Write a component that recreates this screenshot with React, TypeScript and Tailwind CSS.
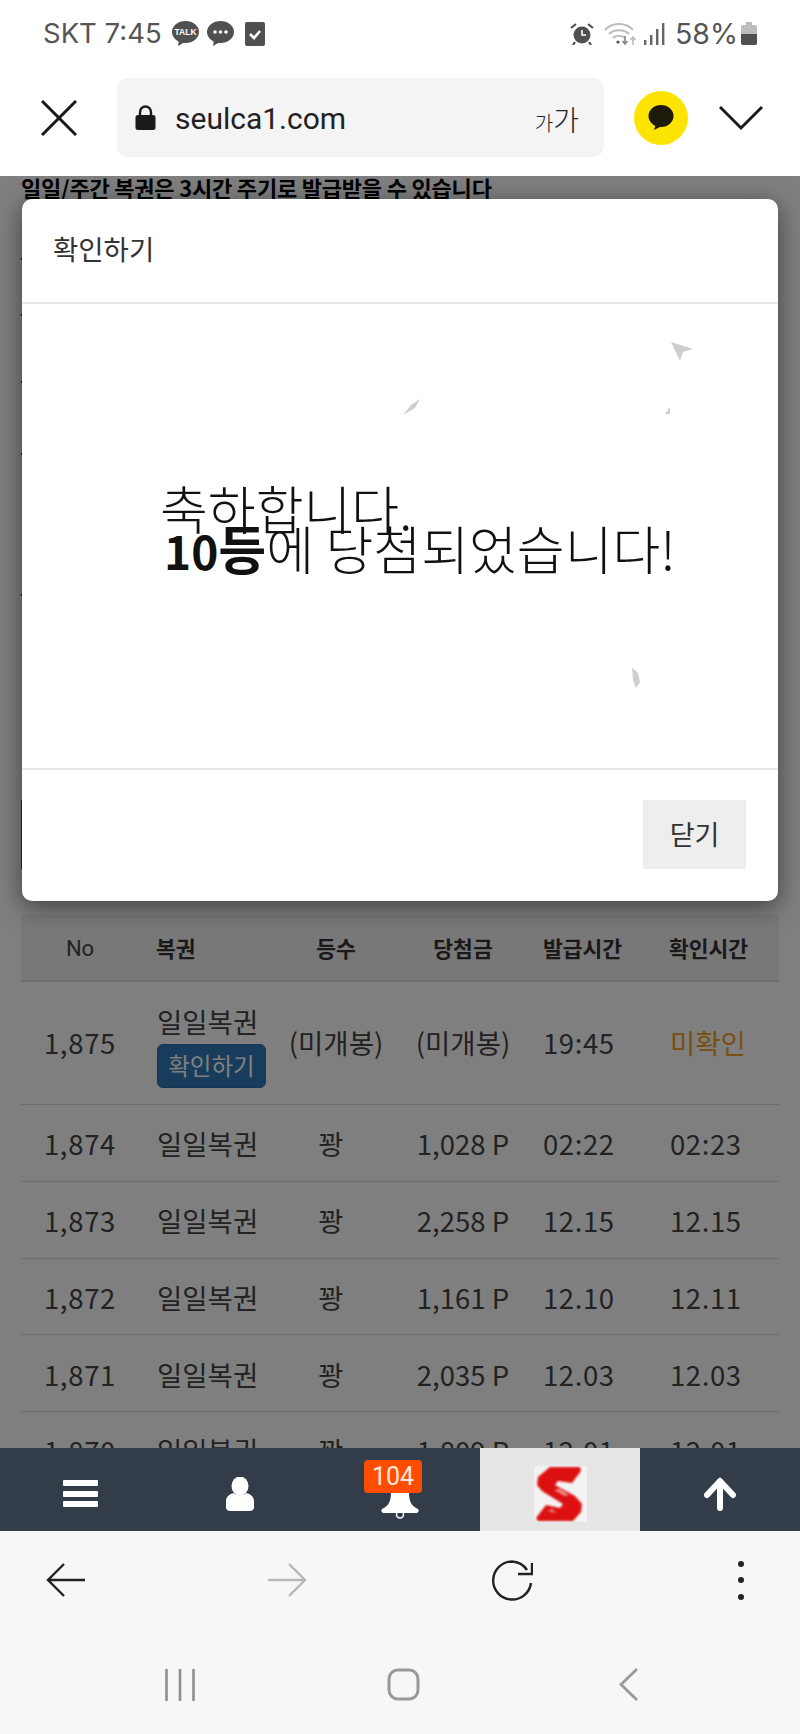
import React from "react";

const KR = { fontFamily: '"Noto Sans CJK KR", "Noto Sans", sans-serif' };
const UI = { fontFamily: 'Roboto, "Noto Sans CJK KR", sans-serif' };
const ST = { fontFamily: 'Inter, Roboto, sans-serif' };

function Talk({ dots }: { dots?: boolean }) {
  return (
    <svg width="27" height="25" viewBox="0 0 27 25">
      <ellipse cx="13.5" cy="11" rx="13.5" ry="11" fill="#505050" />
      <path d="M7 19l-1 6 7-4z" fill="#505050" />
      {dots ? (
        <g fill="#fff">
          <circle cx="8" cy="11" r="1.8" />
          <circle cx="13.5" cy="11" r="1.8" />
          <circle cx="19" cy="11" r="1.8" />
        </g>
      ) : (
        <text x="13.5" y="14" textAnchor="middle" fontSize="8.5" fontWeight="700" fill="#fff" fontFamily="Liberation Sans">TALK</text>
      )}
    </svg>
  );
}

const rows = [
  ["1,874", "1,028 P", "02:22", "02:23"],
  ["1,873", "2,258 P", "12.15", "12.15"],
  ["1,872", "1,161 P", "12.10", "12.11"],
  ["1,871", "2,035 P", "12.03", "12.03"],
  ["1,870", "1,809 P", "12.01", "12.01"],
];

const cols = "grid grid-cols-[118px_133px_128px_126px_126px_126px] items-center";

function Shard({ d }: { d: string }) {
  return <path d={d} fill="#cfcfcf" />;
}

export default function App() {
  return (
    <div className="w-[800px] h-[1734px] flex flex-col bg-white overflow-hidden text-[#222]" style={KR}>
      <div className="h-[176px] shrink-0 bg-white flex flex-col">
        <div className="h-[68px] flex items-start justify-between pt-[21px] pl-[43px] pr-[43px] text-[#555]" style={ST}>
          <div className="flex items-center h-[25px]">
            <span className="w-[129px] text-[27.500px] leading-[25px] whitespace-nowrap">SKT 7:45</span>
            <Talk />
            <span className="w-[8px]" />
            <Talk dots />
            <svg className="ml-[11px]" width="20" height="24" viewBox="0 0 20 24">
              <rect width="20" height="24" rx="2" fill="#505050" />
              <path d="M5 12l4 4 6-7" fill="none" stroke="#fff" strokeWidth="2.6" />
            </svg>
          </div>
          <div className="flex items-center h-[25px]">
            <svg width="24" height="22" viewBox="0 0 24 22">
              <circle cx="12" cy="12" r="8.5" fill="#505050" />
              <path d="M12 7v5h4" fill="none" stroke="#fff" strokeWidth="1.6" />
              <path d="M1 5l5-4M23 5l-5-4M5 19l-2 3M19 19l2 3" stroke="#505050" strokeWidth="2.2" />
            </svg>
            <svg className="ml-[10px]" width="34" height="24" viewBox="0 0 34 24">
              <g fill="none" stroke="#bdbdbd" strokeWidth="2.2">
                <path d="M1 8c7-8 21-8 28 0" />
                <path d="M5 12c5-5 15-5 20 0" />
                <path d="M9 16c3-3 9-3 12 0" />
              </g>
              <circle cx="14" cy="20" r="1.6" fill="#505050" />
              <path d="M21 14v7M18.500 19l2.500 3 2.500-3" fill="none" stroke="#888" strokeWidth="1.6" />
              <path d="M29 23v-7M26.500 18l2.500-3 2.500 3" fill="none" stroke="#bdbdbd" strokeWidth="1.6" />
            </svg>
            <svg className="ml-[6px]" width="22" height="22" viewBox="0 0 22 22">
              <g fill="#666">
                <rect x="0" y="17" width="2.400" height="5" />
                <rect x="6" y="12" width="2.400" height="10" />
                <rect x="12" y="6" width="2.400" height="16" />
                <rect x="18" y="0" width="2.400" height="22" />
              </g>
            </svg>
            <span className="ml-[9px] w-[63px] text-[28.500px] leading-[25px] whitespace-nowrap">58%</span>
            <svg className="ml-[3px]" width="16" height="23" viewBox="0 0 16 23">
              <path d="M5 0h6v3h3a2 2 0 0 1 2 2v16a2 2 0 0 1-2 2H2a2 2 0 0 1-2-2V5a2 2 0 0 1 2-2h3z" fill="#bdbdbd" />
              <path d="M0 12h16v9a2 2 0 0 1-2 2H2a2 2 0 0 1-2-2z" fill="#505050" />
            </svg>
          </div>
        </div>
        <div className="flex items-center h-[79px] mt-[10px]">
          <div className="w-[117px] flex pl-[41px]">
            <svg width="36" height="36" viewBox="0 0 36 36">
              <path d="M1 1l34 34M35 1L1 35" stroke="#1a1a1a" strokeWidth="3" fill="none" />
            </svg>
          </div>
          <div className="w-[487px] h-[79px] rounded-[11px] bg-[#f4f4f5] flex items-center pl-[18px]">
            <svg width="21" height="25" viewBox="0 0 21 25">
              <path d="M5 11V7a5.500 5.500 0 0 1 11 0v4" fill="none" stroke="#1a1a1a" strokeWidth="2.400" />
              <rect x="0.500" y="10" width="20" height="15" rx="2.500" fill="#1a1a1a" />
            </svg>
            <span className="ml-[19px] mt-[3px] text-[30px] text-[#222] leading-none" style={UI}>seulca1.com</span>
            <span className="ml-auto mr-[25px] mt-[2px] flex items-end text-[#222] leading-none font-light" style={KR}>
              <span className="text-[20px]">가</span>
              <span className="text-[28px]">가</span>
            </span>
          </div>
          <div className="ml-[30px] w-[54px] h-[54px] rounded-full bg-[#fde400] flex items-center justify-center">
            <svg width="26" height="26" viewBox="0 0 26 26">
              <ellipse cx="13" cy="11" rx="12.500" ry="11" fill="#1e1a0a" />
              <path d="M8 19l-2 6 8-4z" fill="#1e1a0a" />
            </svg>
          </div>
          <svg className="ml-[31px]" width="44" height="26" viewBox="0 0 44 26">
            <path d="M1 2l21 21L43 2" stroke="#1a1a1a" strokeWidth="3" fill="none" />
          </svg>
        </div>
      </div>

      <div className="relative h-[1272px] shrink-0 overflow-hidden bg-white">
        <div className="px-[21px]">
          <div className="text-[22px] font-bold leading-[22px] h-[22px] text-black tracking-[-0.2px] whitespace-nowrap">일일/주간 복권은 3시간 주기로 발급받을 수 있습니다</div>
          <div className="relative h-[602px]">
            <span className="absolute left-0 top-[60px] w-[1px] h-[2px] bg-[#222]" />
            <span className="absolute left-0 top-[116px] w-[1px] h-[2px] bg-[#222]" />
            <span className="absolute left-0 top-[183px] w-[1px] h-[2px] bg-[#222]" />
            <span className="absolute left-0 top-[255px] w-[1px] h-[2px] bg-[#222]" />
            <span className="absolute left-0 top-[396px] w-[1px] h-[2px] bg-[#222]" />
          </div>
          <div className="h-[69px] w-[100px] bg-[#b03a20]" />
          <div className="h-[46px]" />
          <div className={`${cols} h-[67px] bg-[#f1f1f1] border-b-2 border-[#ddd] text-[21.500px] text-[#333] pt-[2px]`}>
            <div className="text-center font-normal text-[#444] text-[22px]" style={{ fontFamily: "Roboto" }}>No</div>
            <div className="pl-[17px] font-bold">복권</div>
            <div className="text-center font-bold">등수</div>
            <div className="text-center font-bold">당첨금</div>
            <div className="pl-[17px] font-bold">발급시간</div>
            <div className="pl-[17px] font-bold">확인시간</div>
          </div>
          <div className={`${cols} h-[123px] border-b border-[#ddd] text-[27.500px] text-[#444]`}>
            <div className="text-center tracking-[0.7px]">1,875</div>
            <div className="pl-[18px] pt-[4px]">
              <div className="leading-[38px]">일일복권</div>
              <button className="mt-[4px] w-[109px] h-[44px] rounded-[6px] bg-[#2f78b8] border border-[#2e6da4] text-white text-[23.500px] leading-none" style={KR}>확인하기</button>
            </div>
            <div className="text-center">(미개봉)</div>
            <div className="text-center">(미개봉)</div>
            <div className="pl-[17px] tracking-[0.6px]">19:45</div>
            <div className="pl-[18px] text-[#f0a020]">미확인</div>
          </div>
          {rows.map((r) => (
            <div key={r[0]} className={`${cols} h-[76.750px] border-b border-[#ddd] text-[27.500px] text-[#444] pt-[2px]`}>
              <div className="text-center tracking-[0.7px]">{r[0]}</div>
              <div className="pl-[18px]">일일복권</div>
              <div className="text-center pr-[10px]">꽝</div>
              <div className="text-center">{r[1]}</div>
              <div className="pl-[17px] tracking-[0.6px]">{r[2]}</div>
              <div className="pl-[18px] tracking-[0.6px]">{r[3]}</div>
            </div>
          ))}
        </div>

        <div className="absolute inset-0 bg-black/50" />

        <div className="absolute left-[22px] top-[23px] w-[756px] h-[702px] bg-white rounded-[10px] shadow-[0_6px_24px_rgba(0,0,0,0.5)] flex flex-col">
          <div className="h-[105px] shrink-0 border-b-2 border-[#e5e5e5] flex items-center pl-[31px] pb-[4px] text-[27.500px] text-[#333]">확인하기</div>
          <div className="relative h-[464px] shrink-0 pl-[138px] pt-[184px] text-[52px] leading-[40px] text-[#111] font-light whitespace-nowrap">
            <svg className="absolute left-0 top-0 pointer-events-none" width="756" height="464" viewBox="0 0 756 464">
              <Shard d="M649 38l22 7-10 3-3 9z" />
              <Shard d="M381 111l8-10 9-6-5 9z" />
              <Shard d="M643 110l5-7 0 7z" />
              <Shard d="M610 364l6 5 2 9-4 6-3-8z" />
            </svg>
            <div className="relative">축하합니다.</div>
            <div className="relative pl-[4px]"><b className="font-bold"><span className="text-[46px]">10</span>등</b>에 당첨되었습니다!</div>
          </div>
          <div className="flex-1 border-t-2 border-[#e5e5e5] flex justify-end pt-[30px] pr-[32px]">
            <button className="w-[103px] h-[69px] bg-[#eeeeee] text-[27px] text-[#333]" style={KR}>닫기</button>
          </div>
        </div>
      </div>

      <div className="h-[83px] shrink-0 bg-[#333d4a] grid grid-cols-5">
        <div className="flex items-center justify-center pt-[8px]">
          <div className="w-[35px] flex flex-col gap-[4.500px]">
            <div className="h-[6px] rounded-[1px] bg-white" />
            <div className="h-[6px] rounded-[1px] bg-white" />
            <div className="h-[6px] rounded-[1px] bg-white" />
          </div>
        </div>
        <div className="flex items-center justify-center pt-[8px]">
          <svg width="28" height="34" viewBox="0 0 28 34">
            <ellipse cx="14" cy="9" rx="8.500" ry="9.500" fill="#fff" />
            <path d="M8 16c2 3 10 3 12 0 5 1 8 4 8 8v6c0 3-2 4-5 4H5c-3 0-5-1-5-4v-6c0-4 3-7 8-8z" fill="#fff" />
          </svg>
        </div>
        <div className="relative flex items-center justify-center">
          <svg className="mt-[34px]" width="38" height="30" viewBox="0 0 38 30">
            <circle cx="19" cy="22.500" r="3.500" fill="#333d4a" stroke="#fff" strokeWidth="1.500" />
            <path d="M10 0h18c0 9 2 14 9 17 1 1 1 3-1 4H2c-2-1-2-3-1-4 7-3 9-8 9-17z" fill="#fff" />
          </svg>
          <div className="absolute left-[44px] top-[12px] w-[58px] h-[33px] rounded-[4px] bg-[#ff4d00] text-[#ffe9dd] text-[25px] leading-[33px] text-center" style={UI}>104</div>
        </div>
        <div className="bg-[#e6e6e6] flex items-center justify-center pt-[18px] pb-[9px]">
          <div className="w-[53px] h-[56px] rounded-[3px] bg-[#f3f3f3] flex items-center justify-center overflow-hidden">
            <svg width="53" height="56" viewBox="0 0 53 56" className="blur-[1px]">
              <path d="M16 1h30l1 4-9 12-14-2-3 4 20 11 7 8-1 8-8 9H4l-2-3 10-13 14 3 3-4-21-13-5-6 1-8z" fill="#dc1010" />
              <path d="M20 24l11 6 4-1-9-6zM14 45l8 2-4-4z" fill="#f29090" />
            </svg>
          </div>
        </div>
        <div className="flex items-center justify-center pt-[8px]">
          <svg width="34" height="34" viewBox="0 0 34 34">
            <path d="M17 4L4 18M17 4l13 14M17 6v25" stroke="#fff" strokeWidth="6" strokeLinecap="round" strokeLinejoin="round" fill="none" />
          </svg>
        </div>
      </div>

      <div className="flex-1 bg-[#f7f7f8] flex flex-col">
        <div className="h-[112px] flex items-center pl-[46px] pb-[14px]">
          <svg width="40" height="34" viewBox="0 0 40 34">
            <path d="M39 17H2M18 1L2 17l16 16" fill="none" stroke="#222" strokeWidth="2.400" />
          </svg>
          <svg className="ml-[181px]" width="40" height="34" viewBox="0 0 40 34">
            <path d="M1 17h37M22 1l16 16-16 16" fill="none" stroke="#b8b8b8" strokeWidth="2.400" />
          </svg>
          <svg className="ml-[184px]" width="42" height="41" viewBox="0 0 42 41">
            <path d="M36 10A19 19 0 0 0 21 1.500 19 19 0 1 0 40 23" fill="none" stroke="#222" strokeWidth="2.400" />
            <path d="M27 14H41V3" fill="none" stroke="#222" strokeWidth="2.400" />
          </svg>
          <div className="ml-[205px] flex flex-col gap-[10.500px]">
            <div className="w-[6px] h-[6px] rounded-full bg-[#222]" />
            <div className="w-[6px] h-[6px] rounded-full bg-[#222]" />
            <div className="w-[6px] h-[6px] rounded-full bg-[#222]" />
          </div>
        </div>
        <div className="flex items-center pl-[165px] pt-[25px]">
          <svg width="30" height="32" viewBox="0 0 30 32">
            <path d="M1.500 0v32M15 0v32M28.500 0v32" stroke="#8f8f8f" strokeWidth="2.600" fill="none" />
          </svg>
          <svg className="ml-[192px]" width="33" height="33" viewBox="0 0 33 33">
            <rect x="2" y="2" width="29" height="29" rx="9" fill="none" stroke="#999" strokeWidth="3" />
          </svg>
          <svg className="ml-[199px]" width="20" height="33" viewBox="0 0 20 33">
            <path d="M18 1L2 16.500 18 32" fill="none" stroke="#999" strokeWidth="2.800" />
          </svg>
        </div>
      </div>
    </div>
  );
}
